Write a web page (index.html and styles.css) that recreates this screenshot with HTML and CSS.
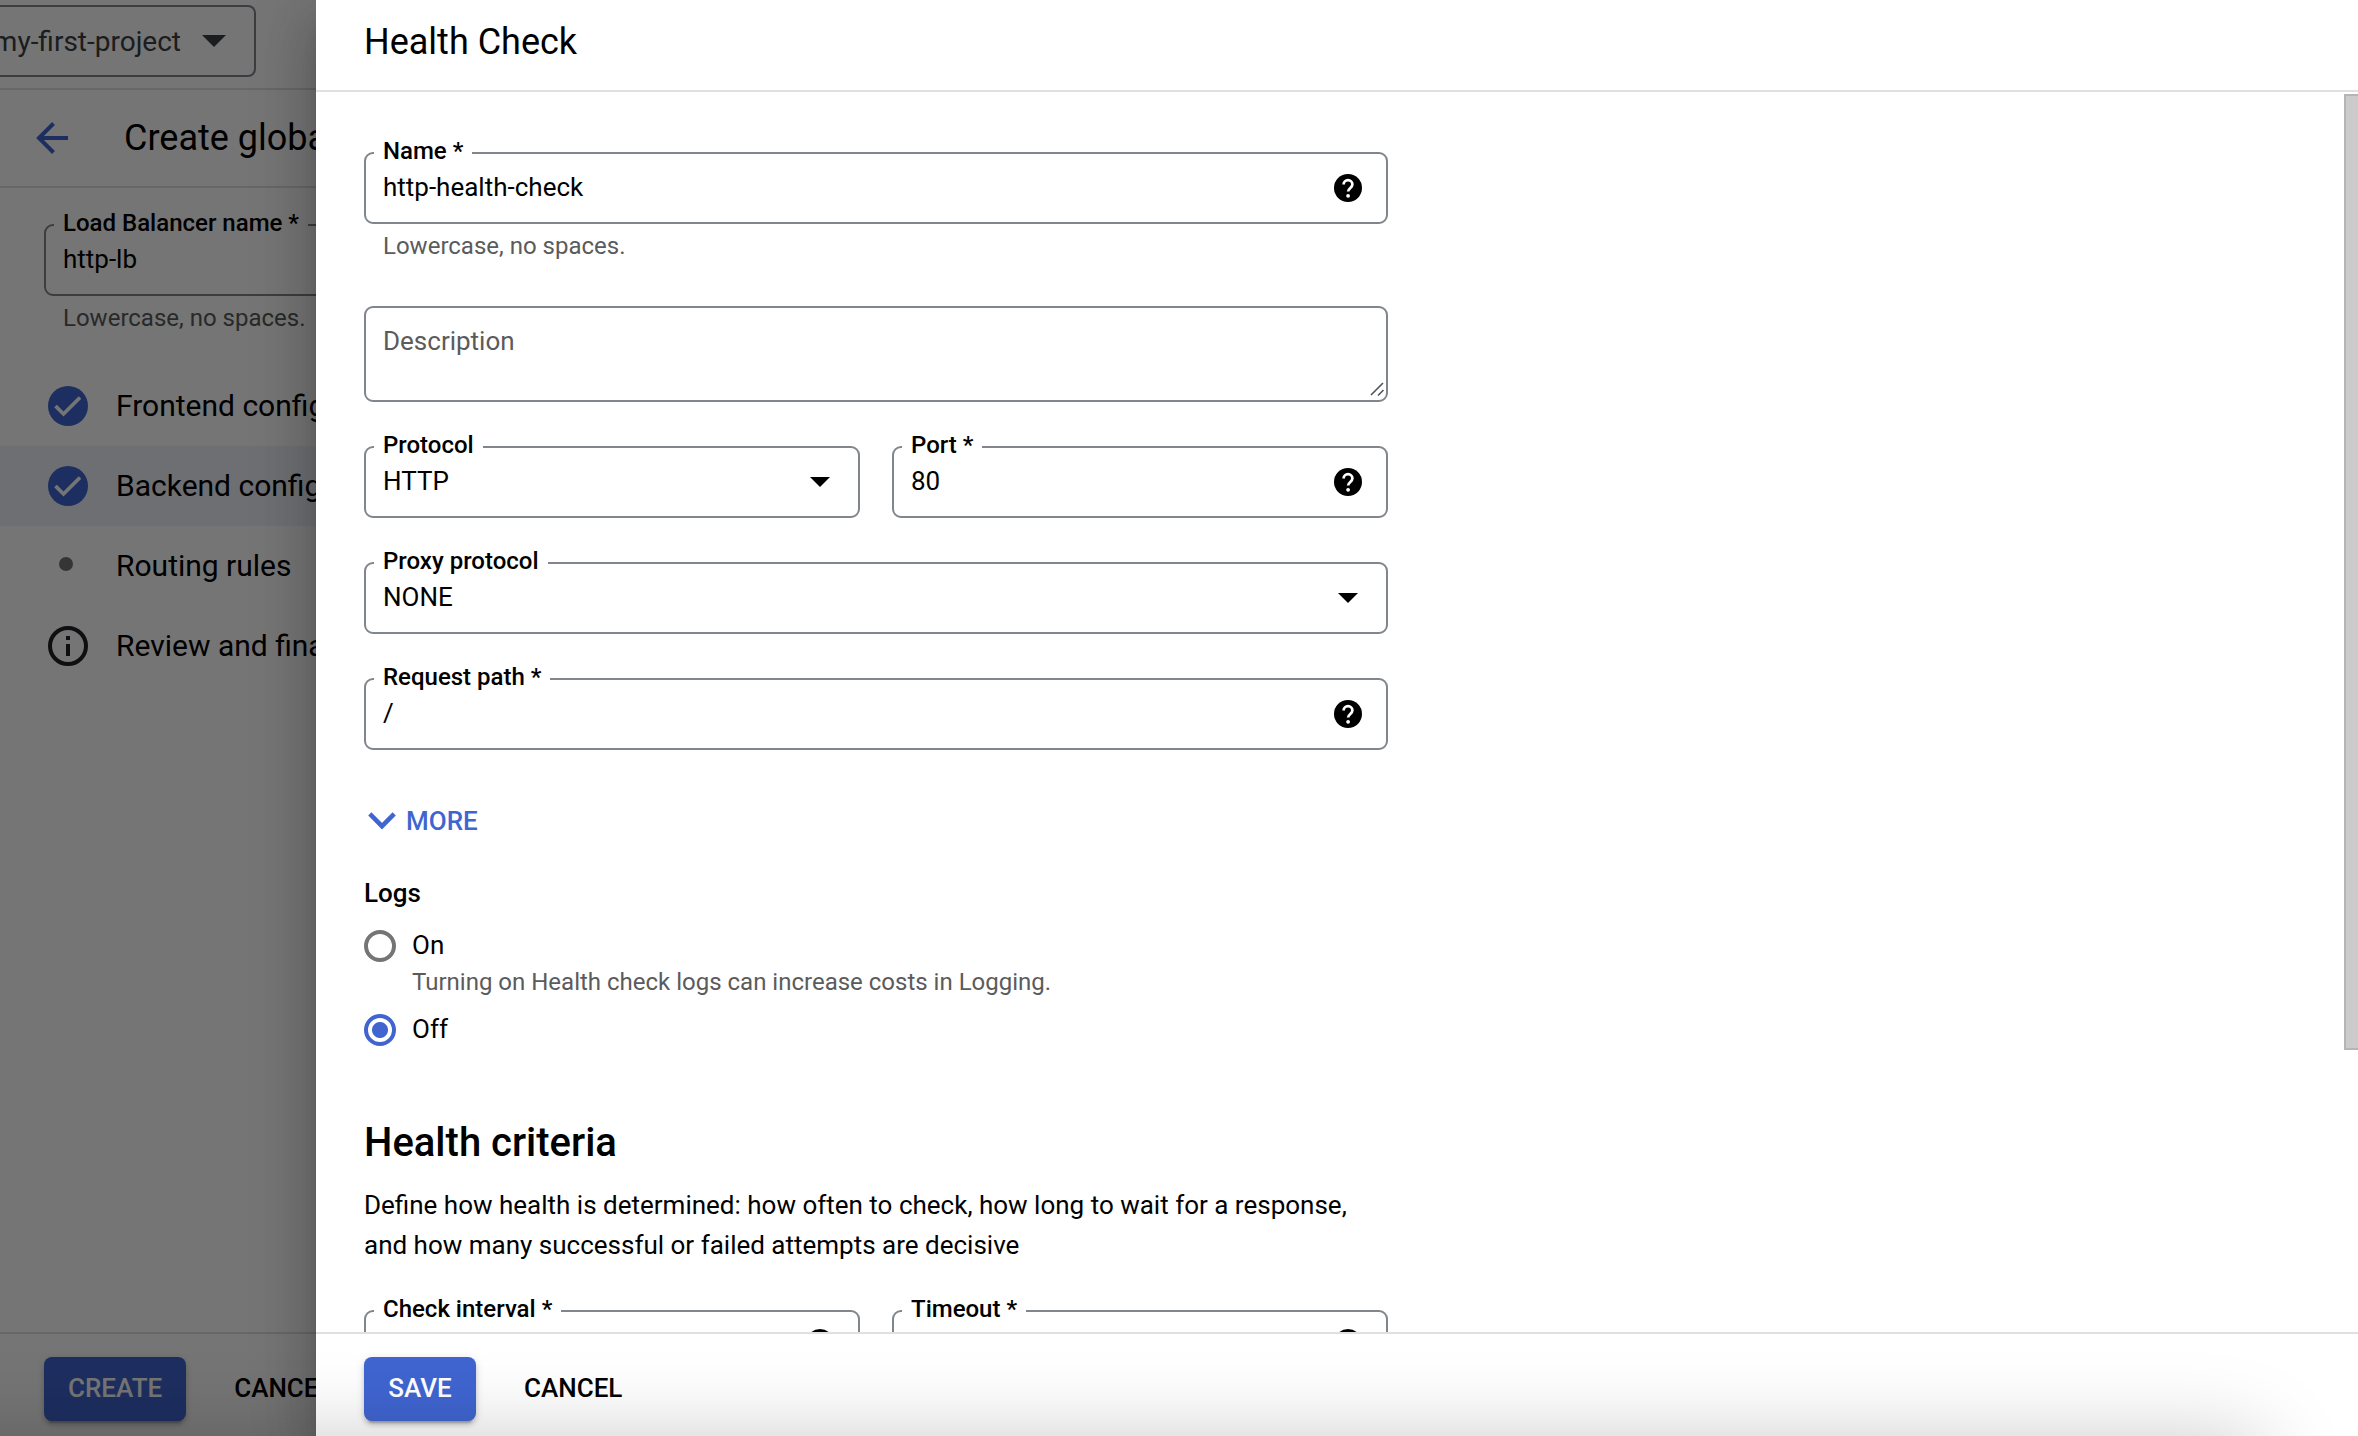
FILE: index.html
```
<!DOCTYPE html>
<html lang="en">
<head>
<meta charset="utf-8">
<title>Health Check</title>
<link rel="stylesheet" href="styles.css">
</head>
<body>
<svg class="defs" aria-hidden="true">
  <symbol id="help" viewBox="0 0 28 28">
    <circle cx="14" cy="14" r="14" fill="currentColor"/>
    <path d="M9.6 10.6a4.4 4.4 0 0 1 8.8 0c0 3.2-4.3 3.5-4.3 7" fill="none" stroke="#fff" stroke-width="2.7"/>
    <circle cx="14.1" cy="21.8" r="1.9" fill="#fff"/>
  </symbol>
  <symbol id="caret" viewBox="0 0 20 10"><path d="M0 0h20L10 10z" fill="currentColor"/></symbol>
  <symbol id="done" viewBox="0 0 40 40">
    <circle cx="20" cy="20" r="20" fill="#4065d1"/>
    <path d="M7.5 20l8 8L32 11.500" fill="none" stroke="#fff" stroke-width="3.7"/>
  </symbol>
</svg>

<div class="page">
  <div class="topbar">
    <div class="project"><span class="project-name">my-first-project</span><svg class="project-caret"><use href="#caret"/></svg></div>
  </div>
  <div class="titlebar">
    <svg class="back" viewBox="0 0 32 32"><path d="M17.500 1.500L3 16l14.500 14.500M2.500 16H32" fill="none" stroke="#4065d1" stroke-width="4"/></svg>
    <h1 class="page-title">Create global</h1>
  </div>
  <div class="sidebar">
    <fieldset class="field lb-field">
      <legend class="label">Load Balancer name *</legend>
      <span class="value">http-lb</span>
    </fieldset>
    <div class="hint">Lowercase, no spaces.</div>
    <div class="steps">
      <div class="step"><svg class="step-icon"><use href="#done"/></svg><span class="step-name">Frontend config</span></div>
      <div class="step active"><svg class="step-icon"><use href="#done"/></svg><span class="step-name">Backend config</span></div>
      <div class="step"><svg class="step-icon" viewBox="0 0 40 40"><circle cx="18" cy="18" r="7" fill="#757575"/></svg><span class="step-name">Routing rules</span></div>
      <div class="step"><svg class="step-icon" viewBox="0 0 40 40"><circle cx="20" cy="20" r="18" fill="none" stroke="#202124" stroke-width="4"/><path d="M18 10h4v4h-4zM18 18h4v12h-4z" fill="#202124"/></svg><span class="step-name">Review and final</span></div>
    </div>
  </div>
  <div class="actions">
    <button class="btn primary create">CREATE</button>
    <button class="btn">CANCEL</button>
  </div>
</div>

<div class="backdrop"></div>

<div class="drawer">
  <header class="drawer-head"><h2 class="drawer-title">Health Check</h2></header>
  <div class="drawer-body">
    <div class="form">
      <fieldset class="field">
        <legend class="label">Name *</legend>
        <span class="value">http-health-check</span><svg class="help"><use href="#help"/></svg>
      </fieldset>
      <div class="hint">Lowercase, no spaces.</div>
      <div class="textarea"><span class="placeholder">Description</span>
        <svg class="grip" viewBox="0 0 14 14"><path d="M1 13L13 1M8 13.500L13.500 8" fill="none" stroke="#555" stroke-width="1.600"/></svg>
      </div>
      <div class="row">
        <fieldset class="field">
          <legend class="label">Protocol</legend>
          <span class="value">HTTP</span><svg class="caret"><use href="#caret"/></svg>
        </fieldset>
        <fieldset class="field">
          <legend class="label">Port *</legend>
          <span class="value">80</span><svg class="help"><use href="#help"/></svg>
        </fieldset>
      </div>
      <fieldset class="field spaced">
        <legend class="label">Proxy protocol</legend>
        <span class="value">NONE</span><svg class="caret"><use href="#caret"/></svg>
      </fieldset>
      <fieldset class="field spaced">
        <legend class="label">Request path *</legend>
        <span class="value">/</span><svg class="help"><use href="#help"/></svg>
      </fieldset>
      <div class="more"><svg class="chevron" viewBox="0 0 28 18"><path d="M1.800 1.800L14 14.200 26.200 1.800" fill="none" stroke="currentColor" stroke-width="4.500"/></svg><span>MORE</span></div>
      <div class="group-title">Logs</div>
      <div class="radio"><i class="dot"></i><span>On</span></div>
      <div class="radio-hint">Turning on Health check logs can increase costs in Logging.</div>
      <div class="radio"><i class="dot checked"></i><span>Off</span></div>
      <h3 class="section">Health criteria</h3>
      <p class="desc">Define how health is determined: how often to check, how long to wait for a response,<br>and how many successful or failed attempts are decisive</p>
      <div class="row criteria">
        <fieldset class="field">
          <legend class="label">Check interval *</legend>
          <span class="value"></span><svg class="help"><use href="#help"/></svg>
        </fieldset>
        <fieldset class="field">
          <legend class="label">Timeout *</legend>
          <span class="value"></span><svg class="help"><use href="#help"/></svg>
        </fieldset>
      </div>
    </div>
    <div class="thumb"></div>
  </div>
  <footer class="drawer-foot">
    <button class="btn primary save">SAVE</button>
    <button class="btn">CANCEL</button>
  </footer>
</div>
<div class="shade-clip"><div class="shade"></div></div>
</body>
</html>
```

FILE: styles.css
```
* { box-sizing: border-box; }
html, body { margin: 0; width: 2358px; height: 1436px; overflow: hidden; }
body { position: relative; background: #fff; color: #000; font-family: Roboto, "Liberation Sans", sans-serif; font-size: 26px; }
.defs { position: absolute; width: 0; height: 0; }
h1, h2, h3, p { margin: 0; font-weight: 400; }
svg { flex: none; display: block; overflow: visible; }

/* Page behind the drawer */
.page { width: 316px; height: 1436px; overflow: hidden; display: flex; flex-direction: column; }
.topbar { height: 90px; padding-top: 5px; border-bottom: 2px solid #e0e0e0; }
.project { width: 256px; height: 72px; border: 2px solid #80868b; border-left: 0; border-radius: 0 8px 8px 0; display: flex; align-items: center; justify-content: flex-end; padding-right: 28px; gap: 21px; color: #3c4043; font-size: 28px; }
.project-name { white-space: nowrap; }
.project-caret { width: 24px; height: 12px; }
.titlebar { height: 98px; border-bottom: 2px solid #e0e0e0; display: flex; align-items: center; padding-left: 36px; gap: 56px; }
.back { width: 32px; height: 32px; }
.page-title { font-size: 36px; line-height: 40px; white-space: nowrap; }
.sidebar { flex: 1; width: 640px; padding-top: 24px; }
.sidebar .hint { margin-left: 44px; }
.steps { margin-top: 34px; }
.step { height: 80px; padding-left: 48px; display: flex; align-items: center; gap: 28px; font-size: 30px; }
.step.active { background: #edf1fa; }
.step-icon { width: 40px; height: 40px; }
.step-name { padding-bottom: 2px; }
.actions, .drawer-foot { height: 104px; flex: none; border-top: 2px solid #e0e0e0; display: flex; align-items: flex-start; padding: 23px 0 0 48px; gap: 24px; }
.actions { padding-left: 44px; }
.backdrop { position: absolute; inset: 0; background: rgba(0, 0, 0, 0.54); }

/* Drawer */
.drawer { position: absolute; left: 316px; top: 0; width: 2042px; height: 1436px; background: #fff; display: flex; flex-direction: column; box-shadow: 0 16px 20px -10px rgba(0,0,0,.2), 0 32px 48px 4px rgba(0,0,0,.14), 0 12px 60px 10px rgba(0,0,0,.12); }
.drawer-head { height: 92px; flex: none; border-bottom: 2px solid #e0e0e0; padding: 21px 48px 0; }
.drawer-title { font-size: 36px; line-height: 42px; }
.drawer-body { flex: 1; min-height: 0; overflow: hidden; display: flex; justify-content: space-between; padding-left: 48px; }
.form { width: 1024px; padding-top: 48px; }
.thumb { width: 14px; height: 956px; margin-top: 2px; background: #cbcbcb; border: 2px solid #b5b5b5; border-right: 0; }

/* Outlined fields; the legend supplies the gap in the border */
.field { min-width: 0; height: 84px; margin: 0; padding: 0 24px 0 8px; border: 2px solid #80868b; border-radius: 9px; display: flex; align-items: center; justify-content: space-between; }
.field.spaced { margin-top: 32px; }
.field.lb-field { margin-left: 44px; }
.label { height: 26px; padding: 0 9px; font-size: 24px; line-height: 23px; font-weight: 500; white-space: nowrap; }
.value { padding-left: 9px; line-height: 30px; position: relative; top: -7px; }
.field > .help { position: relative; top: -6px; }
.field > .caret { position: relative; top: -6px; margin-right: 4px; }
.help { width: 28px; height: 28px; }
.caret { width: 20px; height: 10px; }
.hint { height: 28px; margin-top: 8px; padding-left: 19px; font-size: 24px; line-height: 28px; color: #5b5b5b; }
.textarea { position: relative; height: 96px; margin-top: 46px; border: 2px solid #80868b; border-radius: 9px; padding: 18px 17px; color: #5b5b5b; line-height: 30px; }
.grip { position: absolute; right: 2px; bottom: 4px; width: 14px; height: 14px; }
.row { display: grid; grid-template-columns: 1fr 1fr; gap: 32px; margin-top: 32px; }
.more { margin: 55px 0 0 4px; height: 32px; display: flex; align-items: center; gap: 10px; color: #4065d1; font-weight: 500; }
.chevron { width: 28px; height: 18px; }
.group-title { margin-top: 40px; line-height: 32px; font-weight: 500; }
.radio { display: flex; align-items: center; gap: 16px; height: 32px; }
.radio span { padding-bottom: 2px; }
.group-title + .radio { margin-top: 21px; }
.dot { width: 32px; height: 32px; border: 4px solid #757575; border-radius: 50%; }
.dot.checked { border-color: #4065d1; background: radial-gradient(circle, #4065d1 7.500px, transparent 8.500px); }
.radio-hint { margin: 6px 0 18px; padding-left: 48px; font-size: 24px; line-height: 28px; color: #5b5b5b; }
.section { margin-top: 73px; font-size: 40px; line-height: 48px; font-weight: 500; }
.desc { margin-top: 18px; line-height: 40px; white-space: nowrap; }
.row.criteria { margin-top: 33px; }
.criteria .field > .help { top: -9px; }

.btn { height: 64px; border: 0; border-radius: 8px; padding: 0 24px 2px; background: none; color: #000; font: 500 26px/60px Roboto, "Liberation Sans", sans-serif; }
.primary { background: #4065d1; color: #fff; box-shadow: 0 6px 2px -4px rgba(0,0,0,.2), 0 4px 4px rgba(0,0,0,.14), 0 2px 10px rgba(0,0,0,.12); }
.save { width: 112px; }

/* Soft shadow rising from below the window */
.shade-clip { position: absolute; inset: 0; overflow: hidden; pointer-events: none; }
.shade { position: absolute; left: -200px; top: 1440px; width: 2460px; height: 300px; box-shadow: 0 0 80px rgba(0,0,0,.22); }
```
